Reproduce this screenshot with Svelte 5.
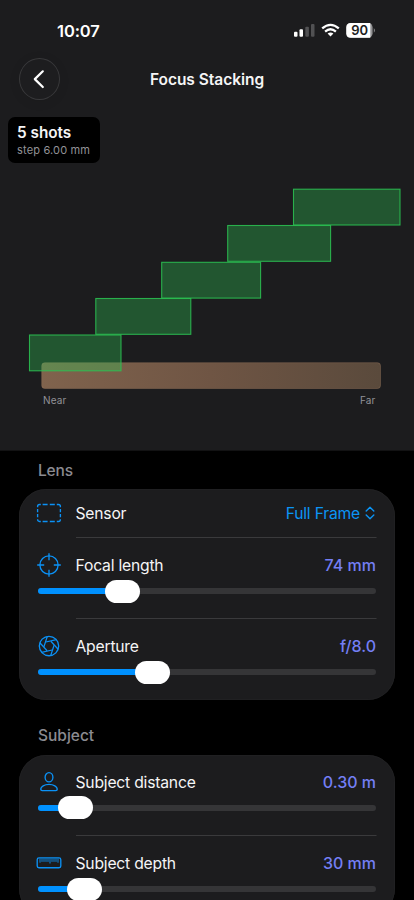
<script>
  const shots = [
    { x: 29.5, y: 335, w: 91.5 },
    { x: 95.8, y: 298.5, w: 95 },
    { x: 161.7, y: 262.3, w: 98.9 },
    { x: 227.7, y: 225.5, w: 102.9 },
    { x: 293.5, y: 189.2, w: 106.5 }
  ];
  const lens = [
    { icon: 'scope', label: 'Focal length', value: '74 mm', pos: 66.5 },
    { icon: 'aperture', label: 'Aperture', value: 'f/8.0', pos: 96.5 }
  ];
  const subject = [
    { icon: 'person', label: 'Subject distance', value: '0.30 m', pos: 20.3 },
    { icon: 'ruler', label: 'Subject depth', value: '30 mm', pos: 29 }
  ];
  const blades = [0, 60, 120, 180, 240, 300];
</script>

{#snippet icon(name)}
  <svg class="icon" viewBox="0 0 26 26" aria-hidden="true">
    {#if name === 'sensor'}
      <path d="M1.6 7.2V6.4Q1.6 4.5 3.5 4.5H4.8M6.6 4.5h5M13.8 4.5h5M20.8 4.5h1.7Q24.4 4.5 24.4 6.4v.8M24.4 9v3.3M24.4 14v3.3M24.4 19.2Q24.4 21.5 22.5 21.5h-1.7M18.8 21.5h-5M11.6 21.5h-5M4.8 21.5H3.5Q1.6 21.5 1.6 19.2M1.6 17.3V14M1.6 12.3V9" />
    {:else if name === 'scope'}
      <circle cx="13" cy="13" r="9.1" />
      <path d="M13 1.2v7M13 17.8v7M1.2 13h7M17.8 13h7" />
    {:else if name === 'aperture'}
      <circle cx="13" cy="13" r="9.7" />
      {#each blades as angle}
        <path d="M10.4 8.6L21.2 7.8" transform="rotate({angle - 8} 13 13)" stroke-width="1.2" />
      {/each}
    {:else if name === 'person'}
      <ellipse cx="13" cy="8.2" rx="3.9" ry="4.6" />
      <path d="M4.7 20.1C4.9 17.6 8.3 15.4 13 15.4S21.1 17.6 21.3 20.1Q21.3 21.6 19.8 21.6H6.2Q4.7 21.6 4.7 20.1Z" />
    {:else}
      <rect x="1.2" y="7.9" width="23.6" height="9.8" rx="1.8" />
      <path stroke-width=".9" d="M4 8.5v4.2M6 8.5v3.4M8 8.5v3.4M10 8.5v3.4M12 8.5v3.4M14 8.5v5M16 8.5v3.4M18 8.5v3.4M20 8.5v3.4M22 8.5v4.2" />
    {/if}
  </svg>
{/snippet}

{#snippet sliderRow(item)}
  <div class="row">
    <div class="line">
      {@render icon(item.icon)}
      <span class="label">{item.label}</span>
      <span class="value">{item.value}</span>
    </div>
    <div class="slider">
      <div class="fill" style="width: {item.pos + 8}px"></div>
      <div class="thumb" style="left: {item.pos}px"></div>
    </div>
  </div>
{/snippet}

<main>
  <section class="viewer">
    <div class="status">
      <span class="time">10:07</span>
      <svg width="84" height="20" viewBox="0 0 84 20" aria-hidden="true">
        <g fill="#fff">
          <rect x="1" y="11.7" width="3.5" height="5" rx="1" />
          <rect x="6.5" y="9.3" width="3.5" height="7.4" rx="1" />
          <g fill="#515153"><rect x="12.3" y="6.7" width="3.6" height="10" rx="1" /><rect x="18" y="4" width="3.5" height="12.7" rx="1" /></g>
          <path d="M37.5 16.6l-2.9-3q2.9-2.4 5.8 0z" />
        </g>
        <g fill="none" stroke="#fff" stroke-width="2.3"><path d="M29.2 8.4Q37.5 1.3 45.8 8.4" /><path d="M32.1 11.6Q37.5 7 42.9 11.6" /></g>
        <rect x="53.3" y="3" width="26.3" height="14.7" rx="4.5" fill="#929294" />
        <path d="M57.8 3H77.3V17.7H57.8Q53.3 17.7 53.3 13.2V7.5Q53.3 3 57.8 3Z" fill="#fff" />
        <path d="M80.8 8q2.2 2.3 0 4.7z" fill="#929294" />
        <text x="66.7" y="14.8" text-anchor="middle" class="battery">90</text>
      </svg>
    </div>
    <header>
      <button aria-label="Back"><svg width="40" height="40" viewBox="0 0 40 40"><path d="M22.8 12.3l-8 7.8 8 7.9" fill="none" stroke="#fff" stroke-width="2.2" stroke-linecap="round" stroke-linejoin="round" /></svg></button>
      <h1>Focus Stacking</h1>
    </header>
    <div class="badge"><strong>5 shots</strong><small>step 6.00 mm</small></div>
    <svg class="chart" width="414" height="287" viewBox="0 163 414 287">
      <defs>
        <linearGradient id="depth"><stop stop-color="#80634d" /><stop offset=".5" stop-color="#6f5544" /><stop offset="1" stop-color="#5a4a3c" /></linearGradient>
      </defs>
      <rect x="41.7" y="362.7" width="338.8" height="25.8" rx="3" fill="url(#depth)" stroke="#a27e62" stroke-opacity=".35" />
      {#each shots as shot}
        <rect x={shot.x} y={shot.y} width={shot.w} height="35.8" fill="#30d158" fill-opacity=".32" stroke="#2bc052" stroke-opacity=".88" stroke-width="1.1" />
      {/each}
      <text x="43" y="403.5" class="axis">Near</text>
      <text x="375.3" y="403.5" text-anchor="end" class="axis">Far</text>
    </svg>
  </section>

  <section class="settings">
    <h2 class="first">Lens</h2>
    <div class="card lens">
      <div class="row sensor">
        <div class="line">
          {@render icon('sensor')}
          <span class="label">Sensor</span>
          <span class="menu">Full Frame</span>
          <svg class="chevrons" width="10" height="14" viewBox="0 0 10 14"><path d="M1.2 5L5 1.3 8.8 5M1.2 9L5 12.7 8.8 9" fill="none" stroke="#0b94f5" stroke-width="1.4" stroke-linecap="round" stroke-linejoin="round" /></svg>
        </div>
      </div>
      {#each lens as item}{@render sliderRow(item)}{/each}
    </div>
    <h2>Subject</h2>
    <div class="card subject">
      {#each subject as item}{@render sliderRow(item)}{/each}
    </div>
  </section>
</main>

<style>
  :global(body) { margin: 0; background: #000; }
  main { width: 414px; height: 900px; overflow: hidden; background: #000; color: #f5f5f6; font-family: Inter, "Liberation Sans", sans-serif; }
  main :global(*) { box-sizing: border-box; }
  .viewer { height: 451px; background: #1c1c1e; border-bottom: 1px solid #121213; display: flex; flex-direction: column; }
  .status { height: 58px; flex: none; padding: 20px 37px 0 57px; display: flex; justify-content: space-between; align-items: flex-start; }
  .time { font-size: 16.5px; line-height: 22px; font-weight: 600; letter-spacing: -0.1px; color: #fff; }
  .battery { font: 600 13px Inter, sans-serif; fill: #1c1c1e; }
  header { height: 59px; flex: none; padding: 0 19px; display: grid; grid-template-columns: 41px 1fr 41px; align-items: start; }
  button { width: 41px; height: 42px; border: 1px solid #39393b; border-radius: 50%; background: #1d1d1f; padding: 0; display: grid; place-items: center; box-shadow: 0 2px 12px #00000014; }
  button svg { display: block; }
  h1 { margin: 0; text-align: center; font-size: 15.5px; line-height: 44px; font-weight: 600; letter-spacing: -0.03px; }
  .badge { width: 92px; height: 46px; flex: none; margin-left: 8px; border-radius: 7px; background: #000; padding: 6px 0 0 9px; display: flex; flex-direction: column; }
  .badge strong { font-size: 15.3px; line-height: 19px; font-weight: 600; }
  .badge small { font-size: 11px; line-height: 17px; color: #929297; letter-spacing: .17px; white-space: nowrap; }
  .chart { display: block; flex: none; }
  .axis { font: 10px Inter, sans-serif; letter-spacing: .1px; fill: #929297; }
  .settings { padding: 0 19px; }
  h2 { margin: 0; padding-left: 19px; height: 39px; line-height: 40px; font-size: 15.5px; font-weight: 500; color: #8b8b91; }
  h2.first { height: 38px; line-height: 39px; letter-spacing: -0.15px; }
  .card { background: #1c1c1e; border-radius: 27px; margin: 0 0 16px; width: 376px; box-shadow: inset 0 0 0 1px #202022; overflow: hidden; }
  .card.lens { height: 211px; }
  .row { height: 81px; padding: 14px 19px 0; }
  .row + .row { background: linear-gradient(#3a3a3c, #3a3a3c) 56.5px 0 / 300.5px 1px no-repeat; padding-top: 15px; }
  .subject .row:first-child { height: 80px; }
  .row.sensor { height: 48px; padding-top: 11px; }
  .line { height: 26px; display: flex; align-items: center; font-size: 15.7px; letter-spacing: -0.21px; }
  .icon { width: 26px; height: 26px; flex: none; margin: 0 13.5px 0 -2px; fill: none; stroke: #0b91f5; stroke-width: 1.35; stroke-linecap: butt; stroke-linejoin: round; }
  .label { flex: 1; }
  .value { color: #747ff5; font-size: 16px; font-weight: 500; letter-spacing: 0; }
  .menu { color: #0b94f5; }
  .chevrons { margin: 0 1px 0 5px; }
  .slider { position: relative; height: 6px; margin-top: 10px; border-radius: 3px; background: #353537; }
  .subject .row:first-child .slider { margin-top: 9.5px; }
  .fill { height: 6px; border-radius: 3px; background: #0091ff; }
  .thumb { position: absolute; top: -8.5px; width: 35px; height: 23px; border-radius: 12px; background: #fff; }
  .card:last-child { margin-bottom: 0; }
</style>
